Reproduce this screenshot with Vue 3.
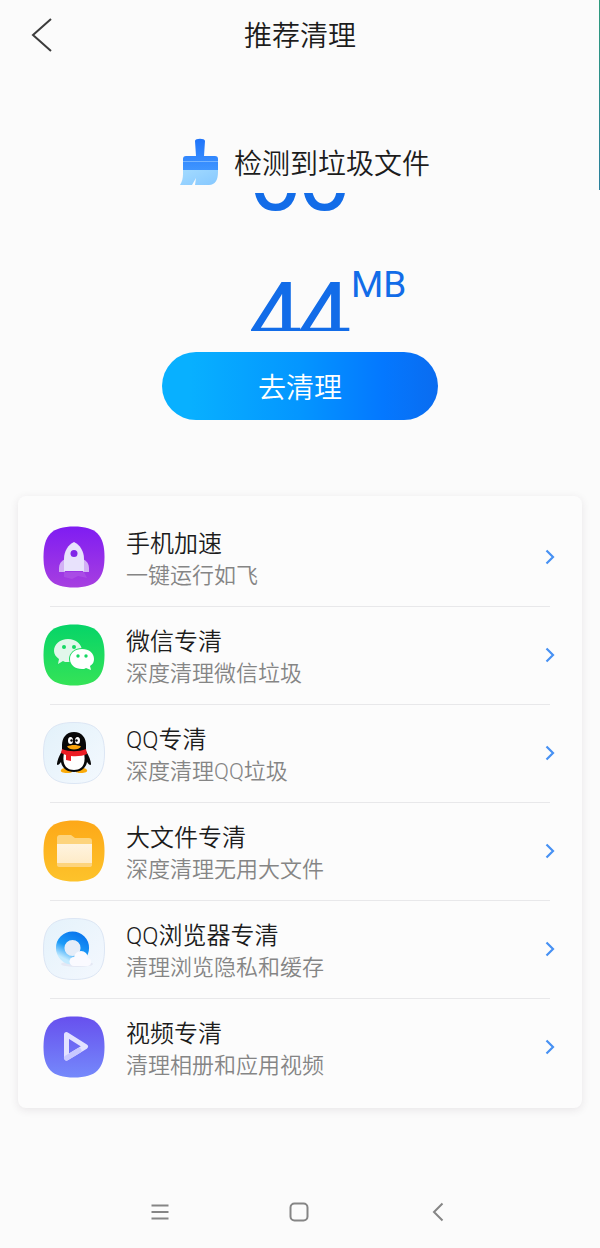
<script setup>
import { computed, ref } from 'vue'

const items = [
  { icon: 'rocket', title: '手机加速', desc: '一键运行如飞' },
  { icon: 'wechat', title: '微信专清', desc: '深度清理微信垃圾' },
  { icon: 'qq', title: 'QQ专清', desc: '深度清理QQ垃圾' },
  { icon: 'folder', title: '大文件专清', desc: '深度清理无用大文件' },
  { icon: 'browser', title: 'QQ浏览器专清', desc: '清理浏览隐私和缓存' },
  { icon: 'video', title: '视频专清', desc: '清理相册和应用视频' }
]

const DIGIT_HEIGHT = 141

const reels = [
  [0, 4],
  [0, 4]
]
const progress = ref(0.61)

const reelStyle = computed(() => ({
  transform: `translateY(${-Math.round(progress.value * DIGIT_HEIGHT)}px)`
}))
</script>

<template>
  <div class="page">
    <i class="edge"></i>

    <header class="header">
      <button class="back" type="button" aria-label="返回">
        <svg width="24" height="36" viewBox="0 0 24 36">
          <path d="M21 2 3 18l18 16" fill="none" stroke="#3c3c3c" stroke-width="2" />
        </svg>
      </button>
      <h1>推荐清理</h1>
    </header>

    <section class="hero">
      <div class="detected">
        <svg width="38" height="48" viewBox="0 0 38 48">
          <defs>
            <linearGradient id="handle" x1="0" y1="0" x2="0" y2="1">
              <stop offset="0" stop-color="#1f74fa" />
              <stop offset="1" stop-color="#3f95ff" />
            </linearGradient>
            <linearGradient id="hair" x1="0" y1="0" x2="1" y2="1">
              <stop offset="0" stop-color="#a4dbff" />
              <stop offset="1" stop-color="#86c8ff" />
            </linearGradient>
          </defs>
          <path d="M3 31h35v3c0 8-3 13-9 13H15l1-7-4 7H0c2-3 3-7 3-11z" fill="url(#hair)" />
          <path d="M15 3c0-3 10-3 10 0l-1 15h11q3 0 3 3v11H3V21q0-3 3-3h10z" fill="url(#handle)" />
          <path d="M3 23.500h35" stroke="#75b4ff" stroke-width="1" />
        </svg>
        <span>检测到垃圾文件</span>
      </div>

      <div class="counter">
        <div class="reels">
          <div v-for="(reel, index) in reels" :key="index" class="reel" :style="reelStyle">
            <span v-for="digit in reel" :key="digit">{{ digit }}</span>
          </div>
        </div>
        <span class="unit">MB</span>
      </div>

      <button class="clean" type="button">去清理</button>
    </section>

    <ul class="card">
      <li v-for="item in items" :key="item.icon">
        <a class="row" href="#">
          <svg class="icon" viewBox="0 0 62 62">
            <defs>
              <linearGradient id="bg-rocket" x1="0" y1="0" x2="0" y2="1">
                <stop offset="0" stop-color="#7f1cf2" />
                <stop offset="1" stop-color="#a73fe0" />
              </linearGradient>
              <linearGradient id="bg-wechat" x1="0" y1="0" x2="0" y2="1">
                <stop offset="0" stop-color="#06d468" />
                <stop offset="1" stop-color="#35e357" />
              </linearGradient>
              <linearGradient id="bg-qq" x1="0" y1="0" x2="1" y2="1">
                <stop offset="0" stop-color="#e2f1fa" />
                <stop offset="1" stop-color="#f4f9fe" />
              </linearGradient>
              <linearGradient id="bg-folder" x1="0" y1="0" x2="0" y2="1">
                <stop offset="0" stop-color="#fda818" />
                <stop offset="1" stop-color="#fdc32b" />
              </linearGradient>
              <linearGradient id="bg-browser" x1="0" y1="0" x2="1" y2="1">
                <stop offset="0" stop-color="#e4f2fb" />
                <stop offset="1" stop-color="#f4f8fe" />
              </linearGradient>
              <linearGradient id="bg-video" x1="0" y1="0" x2="0" y2="1">
                <stop offset="0" stop-color="#6750ee" />
                <stop offset="1" stop-color="#7589fb" />
              </linearGradient>
              <linearGradient id="ring" x1="0.8" y1="0" x2="0.3" y2="1">
                <stop offset="0" stop-color="#0b79ee" />
                <stop offset="0.55" stop-color="#1c9bf8" />
                <stop offset="1" stop-color="#c4ebff" />
              </linearGradient>
              <linearGradient id="paper" x1="0" y1="0" x2="0" y2="1">
                <stop offset="0" stop-color="#fff4df" />
                <stop offset="1" stop-color="#feebc8" />
              </linearGradient>
            </defs>
            <path
              d="M31 .5C53 .5 61.500 9 61.500 31S53 61.500 31 61.500.5 53 .5 31 9 .5 31 .5z"
              :fill="`url(#bg-${item.icon})`"
              :stroke="item.icon === 'qq' || item.icon === 'browser' ? '#dce6f4' : 'none'"
            />

            <g v-if="item.icon === 'rocket'">
              <path d="M22 33c-4 2-6 5-6 9v4h6zM40 33c4 2 6 5 6 9v4h-6z" fill="#d3b1f5" />
              <path d="M31 16c6 3 10 9 10 17v12H21V33c0-8 4-14 10-17z" fill="#e8e2fc" />
              <circle cx="31" cy="27.500" r="3.500" fill="#8126e8" />
              <path d="M21 46h20l3 6-9-2-6 3-8-2z" fill="#b868e8" opacity="0.4" />
            </g>

            <g v-else-if="item.icon === 'wechat'">
              <path d="M25 15c8 0 14 5 14 12s-6 11-14 11c-2 0-4 0-5-1l-5 3 1-5c-3-2-5-5-5-8 0-7 6-12 14-12z" fill="#e2f7eb" />
              <ellipse cx="39" cy="35" rx="13" ry="11" fill="#1fdb60" />
              <path d="M39 25c7 0 12 4 12 10 0 3-1 5-4 7l1 4-5-2c-1 1-3 1-4 1-7 0-12-4-12-10s5-10 12-10z" fill="#fff" />
              <g fill="#16d964">
                <circle cx="21" cy="23" r="2" />
                <circle cx="31" cy="23" r="2" />
                <circle cx="35" cy="32" r="1.700" />
                <circle cx="43" cy="32" r="1.700" />
              </g>
            </g>

            <g v-else-if="item.icon === 'qq'">
              <path d="M18 48c2-3 8-2 11 0 1 3-2 3-5 3-4 0-7-1-6-3zM44 48c-2-3-8-2-11 0-1 3 2 3 5 3 4 0 7-1 6-3z" fill="#faab0b" />
              <path d="M31 10c8 0 12 6 12 13v6c3 5 5 10 5 13 0 2-2 1-4-2-1 6-6 10-13 10s-12-4-13-10c-2 3-4 4-4 2 0-3 2-8 5-13v-6c0-7 4-13 12-13z" fill="#080808" />
              <path d="M21 31h20c2 10-1 17-10 17s-12-7-10-17z" fill="#fff" />
              <ellipse cx="27.500" cy="18.500" rx="2.500" ry="3.500" fill="#fff" />
              <ellipse cx="34.500" cy="18.500" rx="2.500" ry="3.500" fill="#fff" />
              <circle cx="28.500" cy="18.500" r="1.200" fill="#080808" />
              <circle cx="33.500" cy="18.500" r="1.200" fill="#080808" />
              <path d="M24 24.500c4-2 10-2 14 0-2 4-12 4-14 0z" fill="#fba50c" />
              <path d="M19 27c7 3 17 3 24 0l1 5c-4 2-10 2.500-16 2v5l-5-1v-5l-5-2z" fill="#ec1c24" />
            </g>

            <g v-else-if="item.icon === 'folder'">
              <path d="M14 18q0-3 3-3h11l4 3h14q3 0 3 3v24q0 2-3 2H17q-3 0-3-2z" fill="#fdd47d" />
              <path d="M14 24h35v19H14z" fill="url(#paper)" />
            </g>

            <g v-else-if="item.icon === 'browser'">
              <ellipse cx="34" cy="46" rx="16" ry="3" fill="#e4e8f4" />
              <circle cx="29.500" cy="30" r="12.300" fill="#e6edf8" stroke="url(#ring)" stroke-width="8.500" />
              <g fill="#fafaff">
                <circle cx="38" cy="40" r="7" />
                <circle cx="31" cy="43.500" r="4.500" />
                <circle cx="44" cy="44" r="4" />
                <path d="M31 42h13v6H31z" />
              </g>
            </g>

            <g v-else>
              <path d="M23.500 18.500 42.500 30.500 23.500 42z" fill="none" stroke="#e3e2ff" stroke-width="5" stroke-linejoin="round" />
              <path d="M23.500 42 36 34.500" stroke="#c9c9ff" stroke-width="5" stroke-linecap="round" />
            </g>
          </svg>

          <div class="text">
            <strong>{{ item.title }}</strong>
            <span>{{ item.desc }}</span>
          </div>

          <svg class="arrow" width="10" height="16" viewBox="0 0 10 16">
            <path d="M1.500 1.500 8 8l-6.500 6.500" fill="none" stroke="#4791f3" stroke-width="2.200" />
          </svg>
        </a>
      </li>
    </ul>

    <nav class="nav">
      <button type="button" aria-label="菜单">
        <svg width="20" height="20" viewBox="0 0 20 20">
          <path d="M1.500 3.500h17M1.500 10h17M1.500 16.500h17" />
        </svg>
      </button>
      <button type="button" aria-label="主页">
        <svg width="20" height="20" viewBox="0 0 20 20">
          <rect x="1.500" y="1.500" width="17" height="17" rx="4" />
        </svg>
      </button>
      <button type="button" aria-label="后退">
        <svg width="20" height="20" viewBox="0 0 20 20">
          <path d="M14.500 1.500 6 10l8.500 8.500" />
        </svg>
      </button>
    </nav>
  </div>
</template>

<style>
body {
  margin: 0;
  background: #fbfbfb;
}
</style>

<style scoped>
.page {
  position: relative;
  display: flex;
  flex-direction: column;
  min-height: 100vh;
  background: #fbfbfb;
  color: #1c1c1c;
  font-family: Roboto, "Noto Sans CJK SC", sans-serif;
  font-weight: 350;
}

.edge {
  position: absolute;
  top: 0;
  right: 0;
  width: 1px;
  height: 190px;
  background: linear-gradient(#2e9a7c, #2a7f9c);
}

button {
  padding: 0;
  border: 0;
  background: none;
  font-family: inherit;
  font-weight: inherit;
  cursor: pointer;
}

svg {
  display: block;
}

.header {
  display: grid;
  grid-template-columns: 1fr auto 1fr;
  align-items: center;
  height: 70px;
  padding: 0 30px;
}

.back {
  justify-self: start;
}

h1 {
  margin: 0;
  padding-top: 4px;
  font-size: 28px;
  font-weight: inherit;
  line-height: 40px;
}

.hero {
  display: flex;
  flex-direction: column;
  align-items: center;
  padding: 68px 0 76px;
}

.detected {
  display: flex;
  align-items: center;
  gap: 16px;
  height: 48px;
  padding-left: 10px;
  font-size: 28px;
  line-height: 40px;
}

.detected span {
  padding-top: 6px;
}

.counter {
  display: grid;
  grid-template-columns: 1fr auto 1fr;
  align-self: stretch;
  height: 138px;
  margin: 7px 0 21px;
  overflow: hidden;
  color: #126ce8;
  font-weight: 400;
}

.reels {
  display: flex;
  grid-column: 2;
}

.reel {
  display: flex;
  flex-direction: column;
  align-items: center;
  width: 49px;
  font-size: 96px;
  line-height: 141px;
}

.unit {
  padding: 70px 0 0 2px;
  font-size: 37px;
  line-height: 44px;
}

.clean {
  width: 46%;
  height: 68px;
  border-radius: 34px;
  background: linear-gradient(90deg, #08b0ff 10%, #0496ff 50%, #0478ff 80%, #0a6cf0);
  color: #fff;
  font-size: 28px;
}

.card {
  margin: 0 18px;
  padding: 12px 25px;
  border-radius: 8px;
  background: #fcfcfc;
  box-shadow: 0 2px 8px rgba(60, 40, 60, 0.1);
  list-style: none;
}

.row {
  position: relative;
  display: flex;
  align-items: center;
  height: 98px;
  color: inherit;
  text-decoration: none;
}

li + li .row::before {
  content: "";
  position: absolute;
  top: 0;
  left: 7px;
  right: 7px;
  height: 1px;
  background: #e8e8ea;
}

.icon {
  flex: none;
  width: 62px;
  height: 62px;
}

.text {
  display: flex;
  flex: 1;
  flex-direction: column;
  margin-left: 21px;
  padding-top: 6px;
}

.text strong {
  font-size: 24px;
  font-weight: inherit;
  line-height: 32px;
}

.text span {
  color: #858585;
  font-size: 22px;
  line-height: 32px;
}

.arrow {
  margin-right: 2px;
}

.nav {
  display: flex;
  justify-content: space-between;
  margin: auto 152px 0 150px;
  padding-bottom: 26px;
}

.nav svg {
  fill: none;
  stroke: #858585;
  stroke-width: 2;
}
</style>
